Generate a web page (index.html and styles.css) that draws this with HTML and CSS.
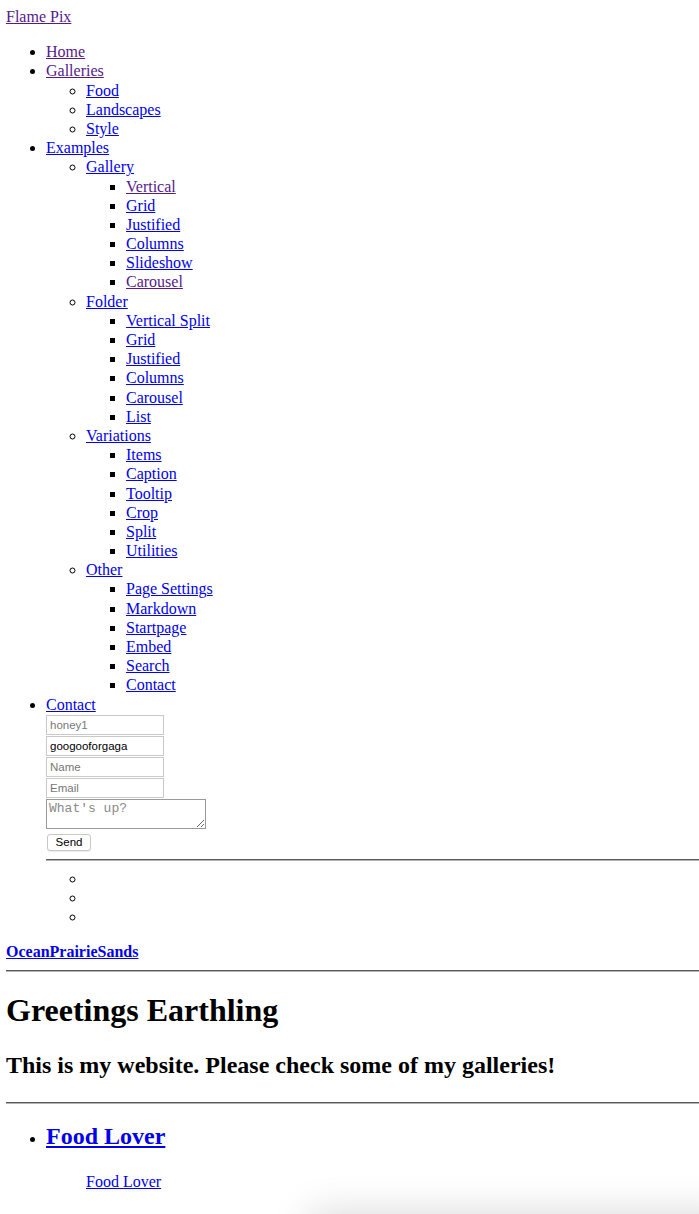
FILE: index.html
```html
<!DOCTYPE html>
<html lang="en">
<head>
  <meta charset="UTF-8" />
  <meta name="viewport" content="width=device-width, initial-scale=1" />
  <title>Flame Pix</title>
  <link rel="stylesheet" href="styles.css">
</head>
<body>
  <a href="#" class="visited">Flame Pix</a>

  <ul class="menu">
    <li><a href="#" class="visited">Home</a></li>
    <li><a href="#" class="visited">Galleries</a>
      <ul>
        <li><a href="#">Food</a></li>
        <li><a href="#">Landscapes</a></li>
        <li><a href="#">Style</a></li>
      </ul>
    </li>
    <li><a href="#">Examples</a>
      <ul>
        <li><a href="#">Gallery</a>
          <ul>
            <li><a href="#" class="visited">Vertical</a></li>
            <li><a href="#">Grid</a></li>
            <li><a href="#">Justified</a></li>
            <li><a href="#">Columns</a></li>
            <li><a href="#">Slideshow</a></li>
            <li><a href="#" class="visited">Carousel</a></li>
          </ul>
        </li>
        <li><a href="#">Folder</a>
          <ul>
            <li><a href="#">Vertical Split</a></li>
            <li><a href="#">Grid</a></li>
            <li><a href="#">Justified</a></li>
            <li><a href="#">Columns</a></li>
            <li><a href="#">Carousel</a></li>
            <li><a href="#">List</a></li>
          </ul>
        </li>
        <li><a href="#">Variations</a>
          <ul>
            <li><a href="#">Items</a></li>
            <li><a href="#">Caption</a></li>
            <li><a href="#">Tooltip</a></li>
            <li><a href="#">Crop</a></li>
            <li><a href="#">Split</a></li>
            <li><a href="#">Utilities</a></li>
          </ul>
        </li>
        <li><a href="#">Other</a>
          <ul>
            <li><a href="#">Page Settings</a></li>
            <li><a href="#">Markdown</a></li>
            <li><a href="#">Startpage</a></li>
            <li><a href="#">Embed</a></li>
            <li><a href="#">Search</a></li>
            <li><a href="#">Contact</a></li>
          </ul>
        </li>
      </ul>
    </li>
    <li><a href="#">Contact</a>
      <form class="contact" onsubmit="return false">
        <input type="text" class="field" name="honey1" placeholder="honey1" />
        <input type="text" class="field" name="honey2" value="googooforgaga" />
        <input type="text" class="field" name="name" placeholder="Name" />
        <input type="email" class="field" name="email" placeholder="Email" />
        <textarea class="message" name="message" placeholder="What's up?"></textarea>
        <button type="submit" class="send">Send</button>
      </form>
      <hr />
      <ul class="social">
        <li></li>
        <li></li>
        <li></li>
      </ul>
    </li>
  </ul>

  <div class="site-name"><strong><a href="#">OceanPrairieSands</a></strong></div>
  <hr />

  <h1>Greetings Earthling</h1>
  <h2>This is my website. Please check some of my galleries!</h2>
  <hr />

  <ul class="galleries">
    <li>
      <h2><a href="#">Food Lover</a></h2>
      <figure class="cover"><a href="#">Food Lover</a></figure>
    </li>
  </ul>

  <div class="drawer"></div>
</body>
</html>
```

FILE: styles.css
```css
body {
  margin: 7px 0 0 6px;
  font-family: "Liberation Serif", "Times New Roman", serif;
  font-size: 16px;
  line-height: 1.2;
  color: #000;
  background: #fff;
}
a { color: #0000ee; }
a.visited { color: #551a8b; }

ul { list-style: disc; padding-left: 40px; }
ul ul { list-style: circle; margin: 0; }
ul ul ul { list-style: square; }

hr {
  border: 0;
  border-top: 1px solid #5a5a5a;
  border-bottom: 1px solid #b4b4b4;
  margin: 8px 0;
}

/* contact form */
.contact { padding-top: 1px; }
.field {
  display: block;
  box-sizing: border-box;
  width: 118px;
  height: 20px;
  margin: 0 0 1px;
  padding: 1px 3px;
  border: 1px solid #c9c9c9;
  font: 11.5px "Liberation Sans", Arial, sans-serif;
  color: #000;
}
.field::placeholder { color: #777; }
.message {
  display: block;
  box-sizing: border-box;
  width: 160px;
  height: 30px;
  margin: 1px 0 0;
  padding: 1px 2px;
  border: 1px solid #999;
  font: 13px "Liberation Mono", "Courier New", monospace;
}
.message::placeholder { color: #8a8a8a; }
.send {
  display: block;
  margin: 5px 0 0 1px;
  width: 44px;
  height: 17px;
  padding: 0;
  background: #fff;
  border: 1px solid #c8c8c8;
  border-radius: 3px;
  box-shadow: 0 1px 1px rgba(0, 0, 0, 0.08);
  font: 11.5px "Liberation Sans", Arial, sans-serif;
  color: #000;
}
.social li { height: 19.2px; }

.site-name { margin-top: 15px; }

h1 { font-size: 32px; margin: 19px 0 22px; }
h2 { font-size: 24px; margin: 21px 0 22px; }
.galleries h2 { margin-top: 18px; }

.cover { margin: 20px 40px 16px; }

.drawer {
  position: fixed;
  left: 310px;
  right: -40px;
  bottom: -80px;
  height: 80px;
  background: #fff;
  box-shadow: 0 0 40px rgba(0, 0, 0, 0.16);
}
```
